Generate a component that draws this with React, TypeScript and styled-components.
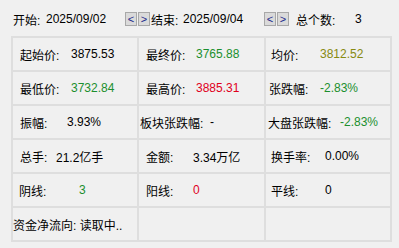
import React from 'react';
import styled, { createGlobalStyle } from 'styled-components';

const GlobalStyle = createGlobalStyle`
  body {
    margin: 0;
    background: #f0f0f0;
    font-family: "Liberation Sans", "Noto Sans CJK SC", sans-serif;
    font-size: 12px;
    color: #000;
  }
`;

const Page = styled.div`
  width: 399px;
  height: 248px;
  background: #f0f0f0;
  overflow: hidden;
`;

const Toolbar = styled.div`
  display: flex;
  align-items: center;
  height: 36px;
  padding-left: 13px;
  padding-top: 2px;
  box-sizing: border-box;
`;

const Field = styled.span<{ $w: number }>`
  display: inline-block;
  width: ${p => p.$w}px;
  white-space: nowrap;
`;

const NavGroup = styled.div`
  display: flex;
  gap: 1px;
  margin-right: 1px;
`;

const NavButton = styled.button`
  width: 12px;
  height: 14px;
  padding: 0;
  border: 1px solid #a8a8a8;
  background: #dadada;
  color: #1a2a8a;
  font: 11px "Liberation Sans", sans-serif;
  line-height: 12px;
  cursor: pointer;
`;

const Table = styled.div`
  margin-left: 11px;
  width: 381px;
  display: grid;
  grid-template-columns: 124px 125px 124px;
  grid-auto-rows: 32px;
  gap: 2px;
  padding: 2px;
  box-sizing: border-box;
  background: #dedede;
`;

const Cell = styled.div<{ $pad: number }>`
  display: flex;
  align-items: center;
  background: #f0f0f0;
  padding-left: ${p => p.$pad}px;
  white-space: pre;
  overflow: hidden;
`;

const Label = styled.span<{ $w?: number }>`
  display: inline-block;
  width: ${p => (p.$w ? `${p.$w}px` : 'auto')};
`;

const Value = styled.span<{ $tone?: 'up' | 'down' | 'avg' }>`
  color: ${p =>
    p.$tone === 'up' ? '#e0001c' : p.$tone === 'down' ? '#1b8f2e' : p.$tone === 'avg' ? '#878a10' : '#000'};
`;

type Item = {
  label?: string;
  value?: string;
  pad: number;
  w?: number;
  tone?: 'up' | 'down' | 'avg';
};

const items: Item[] = [
  { label: '起始价:', value: '3875.53', pad: 7, w: 51 },
  { label: '最终价:', value: '3765.88', pad: 7, w: 50, tone: 'down' },
  { label: '均价:', value: '3812.52', pad: 5, w: 49, tone: 'avg' },
  { label: '最低价:', value: '3732.84', pad: 7, w: 51, tone: 'down' },
  { label: '最高价:', value: '3885.31', pad: 7, w: 50, tone: 'up' },
  { label: '张跌幅:', value: '-2.83%', pad: 3, w: 51, tone: 'down' },
  { label: '振幅:', value: '3.93%', pad: 7, w: 47 },
  { label: '板块张跌幅:', value: '  -', pad: 1 },
  { label: '大盘张跌幅:', value: '-2.83%', pad: 2, w: 72, tone: 'down' },
  { label: '总手:', value: '21.2亿手', pad: 7, w: 36 },
  { label: '金额:', value: '3.34万亿', pad: 7, w: 47 },
  { label: '换手率:', value: '0.00%', pad: 5, w: 54 },
  { label: '阴线:', value: '3', pad: 6, w: 60, tone: 'down' },
  { label: '阳线:', value: '0', pad: 7, w: 47, tone: 'up' },
  { label: '平线:', value: '0', pad: 5, w: 54 },
  { label: '资金净流向: 读取中..', pad: 0 },
  { pad: 0 },
  { pad: 0 },
];

const App: React.FC = () => (
  <Page>
    <GlobalStyle />
    <Toolbar>
      <Field $w={33}>开始:</Field>
      <Field $w={79}>2025/09/02</Field>
      <NavGroup>
        <NavButton>&lt;</NavButton>
        <NavButton>&gt;</NavButton>
      </NavGroup>
      <Field $w={32}>结束:</Field>
      <Field $w={81}>2025/09/04</Field>
      <NavGroup>
        <NavButton>&lt;</NavButton>
        <NavButton>&gt;</NavButton>
      </NavGroup>
      <Field $w={6} />
      <Field $w={59}>总个数:</Field>
      <Field $w={10}>3</Field>
    </Toolbar>
    <Table>
      {items.map((it, i) => (
        <Cell key={i} $pad={it.pad}>
          {it.label && <Label $w={it.w}>{it.label}</Label>}
          {it.value && <Value $tone={it.tone}>{it.value}</Value>}
        </Cell>
      ))}
    </Table>
  </Page>
);

export default App;
